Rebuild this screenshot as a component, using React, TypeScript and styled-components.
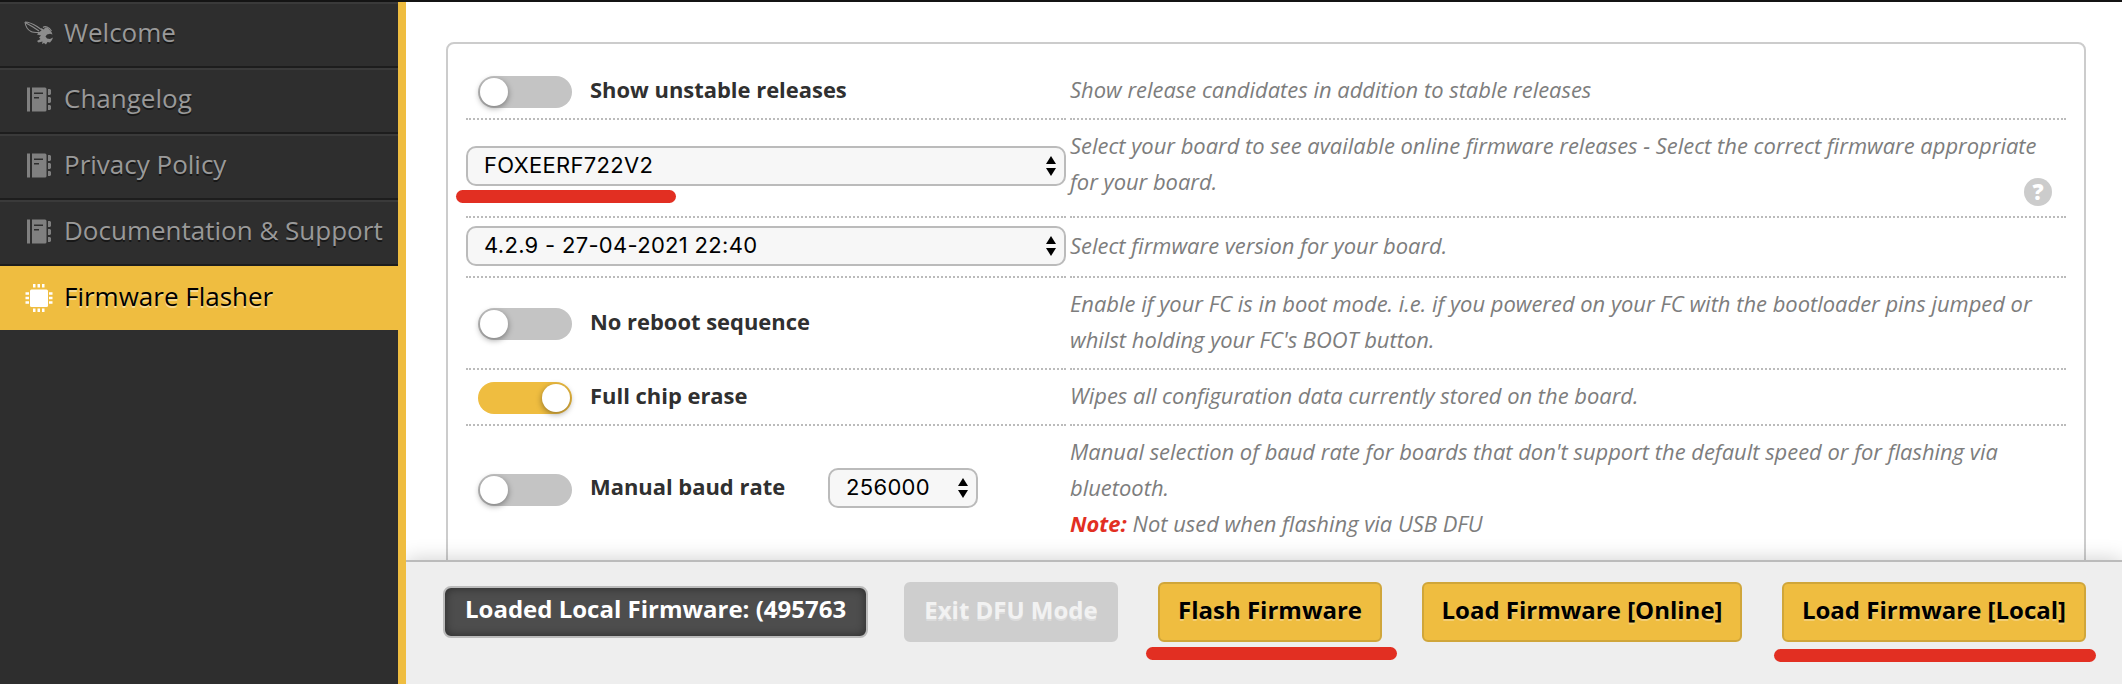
import React from 'react';
import styled, { createGlobalStyle } from 'styled-components';

const GlobalStyle = createGlobalStyle`
  * { box-sizing: border-box; }
  body { margin: 0; font-family: 'Open Sans', 'Noto Sans', sans-serif; background: #fff; }
`;

const Page = styled.div`
  display: flex;
  width: 2122px;
  height: 684px;
  border-top: 2px solid #141414;
  overflow: hidden;
`;

const Sidebar = styled.nav`
  flex: none;
  width: 406px;
  background: #2e2e2e;
  border-right: 8px solid #efbd40;
`;

const NavItem = styled.a<{ $active?: boolean }>`
  display: flex;
  align-items: center;
  height: ${p => (p.$active ? 64 : 66)}px;
  padding: 0 0 ${p => (p.$active ? 5 : 7)}px 24px;
  font-size: 26px;
  white-space: nowrap;
  color: ${p => (p.$active ? '#000' : '#999')};
  background: ${p => (p.$active ? '#efbd40' : 'transparent')};
  border-top: ${p => (p.$active ? 'none' : '2px solid #3a3a3a')};
  border-bottom: ${p => (p.$active ? 'none' : '2px solid #1d1d1d')};
  text-shadow: 0 2px ${p => (p.$active ? 'rgba(255,255,255,.45)' : 'rgba(0,0,0,.5)')};
`;

const NavIcon = styled.svg`
  flex: none;
  width: 30px;
  height: 30px;
  margin-right: 10px;
  overflow: visible;
`;

const Main = styled.main`
  flex: 1;
  display: flex;
  flex-direction: column;
  min-width: 0;
  overflow: hidden;
`;

const Content = styled.div`
  height: 558px;
  padding: 40px 36px 0 40px;
  overflow: hidden;
`;

const Panel = styled.section`
  height: 700px;
  padding: 20px 18px;
  border: 2px solid #ccc;
  border-radius: 8px;
`;

const Row = styled.div<{ $h: number }>`
  display: grid;
  grid-template-columns: 600px 996px;
  column-gap: 4px;
  height: ${p => p.$h}px;
`;

const Control = styled.div<{ $last?: boolean }>`
  display: flex;
  align-items: center;
  border-bottom: ${p => (p.$last ? 'none' : '2px dotted #bbb')};
`;

const Description = styled.div<{ $last?: boolean; $top?: number }>`
  position: relative;
  padding-top: ${p => p.$top ?? 8}px;
  border-bottom: ${p => (p.$last ? 'none' : '2px dotted #bbb')};
  font-size: 21.93px;
  line-height: 36px;
  font-style: italic;
  white-space: nowrap;
  color: #7d7d7d;
`;

const Note = styled.b`
  color: #e22f22;
`;

const Toggle = styled.span<{ $on?: boolean; $mt?: number }>`
  display: flex;
  flex: none;
  justify-content: ${p => (p.$on ? 'flex-end' : 'flex-start')};
  width: 94px;
  height: 32px;
  margin: ${p => p.$mt ?? 2}px 18px 0 12px;
  padding: 2px;
  border-radius: 16px;
  background: ${p => (p.$on ? '#efbd40' : '#c4c4c4')};
`;

const Knob = styled.span`
  width: 28px;
  height: 28px;
  border-radius: 50%;
  background: #fff;
  box-shadow: 0 2px 6px rgba(0, 0, 0, 0.4);
`;

const Label = styled.span`
  margin-top: -3px;
  font-size: 21.93px;
  font-weight: 700;
  line-height: 36px;
  white-space: nowrap;
  color: #303030;
`;

const SelectBox = styled.div<{ $w: number; $ml?: number; $mt?: number }>`
  display: flex;
  align-items: center;
  justify-content: space-between;
  width: ${p => p.$w}px;
  height: 40px;
  margin-left: ${p => p.$ml ?? 0}px;
  margin-top: ${p => p.$mt ?? 0}px;
  padding: 0 8px 2px 16px;
  border: 2px solid #bbb;
  border-radius: 10px;
  background: #f7f7f7;
  font-family: Inter, sans-serif;
  font-size: 22px;
  letter-spacing: 0.3px;
  color: #000;
`;

const ArrowSvg = styled.svg`
  margin-top: 2px;
`;

const Help = styled.span`
  position: absolute;
  right: 14px;
  bottom: 10px;
  width: 28px;
  height: 28px;
  border-radius: 50%;
  background: #ccc;
  color: #fff;
  font-size: 22px;
  font-style: normal;
  font-weight: 800;
  line-height: 27px;
  text-align: center;
`;

const Toolbar = styled.footer`
  position: relative;
  display: flex;
  align-items: flex-start;
  height: 124px;
  padding: 20px 36px 0 37px;
  border-top: 2px solid #bbb;
  background: #eee;
  box-shadow: 0 0 20px rgba(0, 0, 0, 0.2);
`;

const Status = styled.div`
  width: 425px;
  height: 52px;
  margin: 4px 36px 0 0;
  padding-left: 20px;
  border: 2px solid #bbb;
  border-radius: 8px;
  background: #4d4d4d;
  box-shadow: inset 0 0 10px rgba(0, 0, 0, 0.45);
  color: #fff;
  font-size: 24px;
  font-weight: 700;
  line-height: 41px;
  white-space: nowrap;
`;

const Button = styled.button<{ $w: number; $disabled?: boolean }>`
  position: relative;
  width: ${p => p.$w}px;
  height: 60px;
  margin: 0 40px 0 0;
  padding: 0 0 5px;
  border: 2px solid ${p => (p.$disabled ? '#cecece' : '#d0a63a')};
  border-radius: 6px;
  background: ${p => (p.$disabled ? '#cecece' : '#efbd40')};
  color: ${p => (p.$disabled ? '#f2f2f2' : '#000')};
  font: 700 24px 'Open Sans', sans-serif;
  white-space: nowrap;
  text-shadow: 0 2px rgba(255, 255, 255, 0.3);
  &:last-child { margin-right: 0; }
`;

const Underline = styled.i<{ $x: number; $y: number; $w: number }>`
  position: absolute;
  left: ${p => p.$x}px;
  top: ${p => p.$y}px;
  width: ${p => p.$w}px;
  height: 13px;
  border-radius: 7px;
  background: #e22f22;
`;

const BoardControl = styled(Control)`
  position: relative;
`;

const Arrows = () => (
  <ArrowSvg width="10" height="20" viewBox="0 0 10 20">
    <path d="M5 0L10 8H0zM5 20L0 12H10z" />
  </ArrowSvg>
);

const BeeIcon = () => (
  <NavIcon viewBox="0 0 30 30" fill="none" stroke="#8c8c8c">
    <path strokeWidth="1.100" d="M1 5C5 5 9 7 13 9.500L18 13M1 5C1.500 9 4 13 7 14.500C9 15.500 12 15.500 15 15.500M2 6L9 10L15 14" />
    <path
      fill="#8c8c8c"
      stroke="none"
      d="M14.500 15.500L17.500 13.500L17 11L20 12.500C20.500 10.500 22 10 24 11L27.500 15L28.500 17.500L26 16.800L23 17.500L21.500 19.500L23 21.500L26 22L29 20.500L28 23L26 25.500L23.500 25L22 27.500L20 26L18 27L18.500 24.500L14.500 25.500L13 24L16.500 22L15 20.500L17 18.500L13 17.500Z"
    />
    <path strokeWidth="1.100" d="M19 10.500C21 8.500 25 10 27.500 14" />
  </NavIcon>
);

const BookIcon = () => (
  <NavIcon viewBox="0 0 30 30" fill="#808080">
    <path d="M3 4.500h3v24h-3z" />
    <path fillRule="evenodd" d="M8 4.500h13a1.500 1.500 0 0 1 1.500 1.500v21a1.500 1.500 0 0 1-1.500 1.500H8zM10 9.500v1.500h9V9.500zM10 14v1.500h5V14z" />
    <path d="M24 6h2l1 1v4l-1 1h-2zM24 14h2l1 1v4l-1 1h-2zM24 22h2l1 1v3l-1 1h-2z" />
  </NavIcon>
);

const ChipIcon = () => (
  <NavIcon viewBox="0 0 30 30" fill="#fff">
    <rect x="6" y="8.500" width="18" height="17.500" rx="1.500" />
    <path d="M9 3h2.500v3.500H9zM13.500 3h2.500v3.500h-2.500zM18 3h2.500v3.500h-2.500zM9 27.500h2.500v3.500H9zM13.500 27.500h2.500v3.500h-2.500zM18 27.500h2.500v3.500h-2.500zM1.500 11.200h3.500v2.500H1.500zM1.500 15.700h3.500v2.500H1.500zM1.500 20.200h3.500v2.500H1.500zM25 11.200h3.500v2.500h-3.500zM25 15.700h3.500v2.500h-3.500zM25 20.200h3.500v2.500h-3.500z" />
  </NavIcon>
);

export default function App() {
  return (
    <>
      <GlobalStyle />
      <Page>
        <Sidebar>
          <NavItem><BeeIcon />Welcome</NavItem>
          <NavItem><BookIcon />Changelog</NavItem>
          <NavItem><BookIcon />Privacy Policy</NavItem>
          <NavItem><BookIcon />Documentation &amp; Support</NavItem>
          <NavItem $active><ChipIcon />Firmware Flasher</NavItem>
        </Sidebar>
        <Main>
          <Content>
            <Panel>
              <Row $h={56}>
                <Control><Toggle><Knob /></Toggle><Label>Show unstable releases</Label></Control>
                <Description>Show release candidates in addition to stable releases</Description>
              </Row>
              <Row $h={98}>
                <BoardControl>
                  <SelectBox $w={600} $mt={-4}>FOXEERF722V2<Arrows /></SelectBox>
                  <Underline $x={-10} $y={70} $w={220} />
                </BoardControl>
                <Description>
                  Select your board to see available online firmware releases - Select the correct firmware appropriate<br />
                  for your board.
                  <Help>?</Help>
                </Description>
              </Row>
              <Row $h={60}>
                <Control><SelectBox $w={600} $mt={-2}>4.2.9 - 27-04-2021 22:40<Arrows /></SelectBox></Control>
                <Description $top={10}>Select firmware version for your board.</Description>
              </Row>
              <Row $h={92}>
                <Control><Toggle><Knob /></Toggle><Label>No reboot sequence</Label></Control>
                <Description>
                  Enable if your FC is in boot mode. i.e. if you powered on your FC with the bootloader pins jumped or<br />
                  whilst holding your FC's BOOT button.
                </Description>
              </Row>
              <Row $h={56}>
                <Control><Toggle $on><Knob /></Toggle><Label>Full chip erase</Label></Control>
                <Description>Wipes all configuration data currently stored on the board.</Description>
              </Row>
              <Row $h={124}>
                <Control $last>
                  <Toggle $mt={4}><Knob /></Toggle><Label>Manual baud rate</Label>
                  <SelectBox $w={150} $ml={43}>256000<Arrows /></SelectBox>
                </Control>
                <Description $last>
                  Manual selection of baud rate for boards that don't support the default speed or for flashing via<br />
                  bluetooth.<br />
                  <Note>Note:</Note> Not used when flashing via USB DFU
                </Description>
              </Row>
            </Panel>
          </Content>
          <Toolbar>
            <Status>Loaded Local Firmware: (495763</Status>
            <Button $w={214} $disabled>Exit DFU Mode</Button>
            <Button $w={224}>Flash Firmware<Underline $x={-14} $y={63} $w={251} /></Button>
            <Button $w={320}>Load Firmware [Online]</Button>
            <Button $w={304}>Load Firmware [Local]<Underline $x={-10} $y={65} $w={322} /></Button>
          </Toolbar>
        </Main>
      </Page>
    </>
  );
}
